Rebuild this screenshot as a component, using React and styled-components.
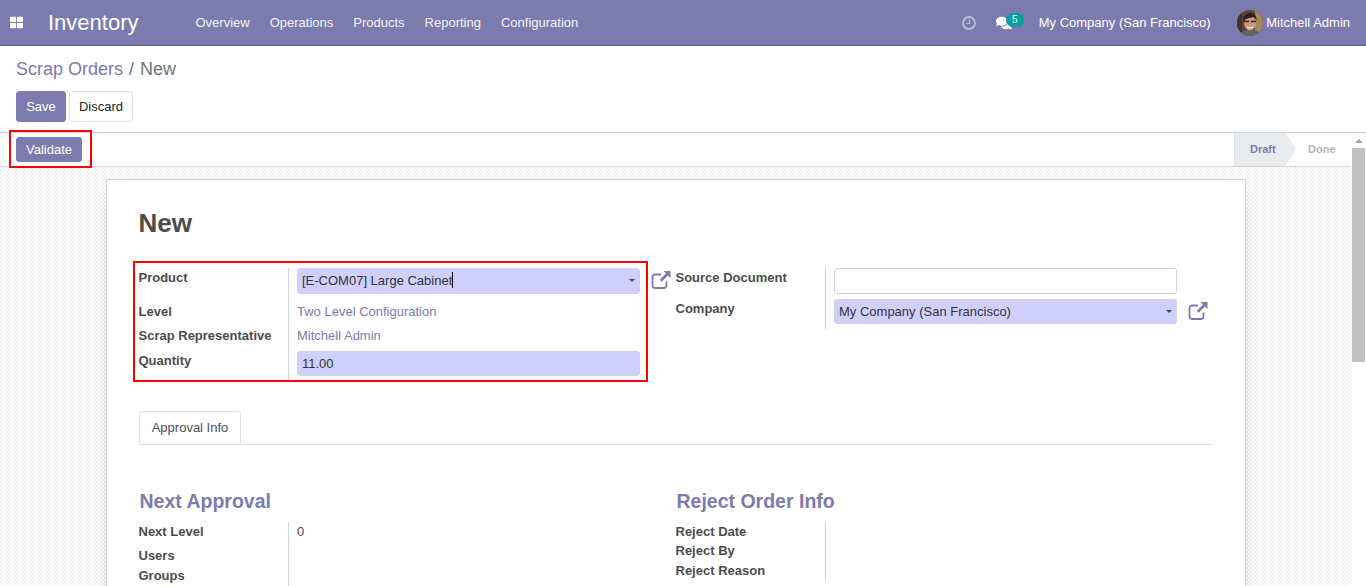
import React from 'react';
import styled, {createGlobalStyle} from 'styled-components';
import {FaThLarge, FaComments} from 'react-icons/fa';

const Global = createGlobalStyle`
    html, body {
        margin:0;
        padding:0;
        height:100%;
        overflow:hidden;
    }
    body {
        font-family:"Liberation Sans", Arial, sans-serif;
        font-size:13px;
        color:#4c4c4c;
        background:#fff;
    }
`

const menus = ['Overview','Operations','Products','Reporting','Configuration'];

const LinkIcon = ({size}) => (
    <svg width={size} height={size} viewBox="0 0 20 20" fill="none">
        <path d="M15.5 11.5v4a2.5 2.5 0 0 1-2.5 2.5H4a2.5 2.5 0 0 1-2.5-2.5V7A2.5 2.5 0 0 1 4 4.5h6" stroke="#7c7bad" strokeWidth="1.8"/>
        <path d="M12.5 1h7v7l-2.500-2.500-6.300 6.300-2-2L15 3.500z" fill="#7c7bad"/>
    </svg>
)

const ClockGlyph = () => (
    <svg width="14" height="14" viewBox="0 0 14 14" fill="none" stroke="currentColor">
        <circle cx="7" cy="7" r="6" strokeWidth="1.800"/>
        <path d="M7.500 3v4.500H4.500" strokeWidth="1.100"/>
    </svg>
)

const Avatar = () => (
    <svg width="26" height="26" viewBox="0 0 26 26">
        <clipPath id="round"><circle cx="13" cy="13" r="13"/></clipPath>
        <g clipPath="url(#round)">
            <rect width="26" height="26" fill="#5a4433"/>
            <rect x="18" width="8" height="26" fill="#a08a5e"/>
            <rect width="5" height="26" fill="#3f332b"/>
            <path d="M3 26c0-5 5-6 10-6s10 1 10 6z" fill="#5f6462"/>
            <ellipse cx="13" cy="13" rx="6" ry="7.500" fill="#c99a7e"/>
            <path d="M6.500 11c-.5-6 3.500-8 7-8s6.500 2.500 6 8c-1-2-1.500-3.500-3-4-3 1-7 1-10 4z" fill="#2c211b"/>
            <path d="M7 11.500h5M14 11.500h5" stroke="#2b2523" strokeWidth="1.300"/>
            <path d="M10 17c2 1.200 4 1.200 6 0" stroke="#f1e6dc" strokeWidth="1.100" fill="none"/>
        </g>
    </svg>
)

export default function App(){
    return (
        <>
            <Global/>
            <Page>
                <NavBar>
                    <AppsButton><FaThLarge size={13}/></AppsButton>
                    <Brand>Inventory</Brand>
                    <MenuList>
                        {menus.map(m => <MenuItem key={m}>{m}</MenuItem>)}
                    </MenuList>
                    <Systray>
                        <ClockIcon><ClockGlyph/></ClockIcon>
                        <Messages>
                            <FaComments size={16}/>
                            <Badge>5</Badge>
                        </Messages>
                        <CompanyName>My Company (San Francisco)</CompanyName>
                        <UserMenu>
                            <Avatar/>
                            <span>Mitchell Admin</span>
                        </UserMenu>
                    </Systray>
                </NavBar>

                <ControlPanel>
                    <Breadcrumb>
                        <a>Scrap Orders</a>
                        <Slash>/</Slash>
                        <span>New</span>
                    </Breadcrumb>
                    <Buttons>
                        <PrimaryButton>Save</PrimaryButton>
                        <SecondaryButton>Discard</SecondaryButton>
                    </Buttons>
                </ControlPanel>

                <Body>
                    <Main>
                        <StatusBar>
                            <ValidateBox>
                                <ValidateButton>Validate</ValidateButton>
                            </ValidateBox>
                            <Stages>
                                <Stage $active>Draft</Stage>
                                <Stage>Done</Stage>
                            </Stages>
                        </StatusBar>
                        <Background>
                            <Sheet>
                                <Title>New</Title>
                                <TopGroup>
                                    <Column>
                                        <Highlight/>
                                        <Labels>
                                            <Label $h={34}>Product</Label>
                                            <Label $h={24}>Level</Label>
                                            <Label $h={25}>Scrap Representative</Label>
                                            <Label $h={30}>Quantity</Label>
                                        </Labels>
                                        <Values>
                                            <SelectField $h={26} $lift>
                                                <span>[E-COM07] Large Cabinet<Caret/></span>
                                                <Arrow/>
                                            </SelectField>
                                            <LinkValue $top={10}>Two Level Configuration</LinkValue>
                                            <LinkValue $top={8}>Mitchell Admin</LinkValue>
                                            <SelectField $h={25} $top={7}>
                                                <span>11.00</span>
                                            </SelectField>
                                        </Values>
                                        <OpenLink><LinkIcon size={20}/></OpenLink>
                                    </Column>
                                    <Column $second>
                                        <Labels>
                                            <Label $h={31}>Source Document</Label>
                                            <Label $h={31}>Company</Label>
                                        </Labels>
                                        <Values>
                                            <TextField/>
                                            <SelectField $h={25} $top={5}>
                                                <span>My Company (San Francisco)</span>
                                                <Arrow/>
                                            </SelectField>
                                        </Values>
                                        <CompanyLink><LinkIcon size={20}/></CompanyLink>
                                    </Column>
                                </TopGroup>

                                <Tabs>
                                    <Tab>Approval Info</Tab>
                                </Tabs>

                                <BottomGroup>
                                    <InfoColumn>
                                        <Heading>Next Approval</Heading>
                                        <InfoRows>
                                            <Labels $info>
                                                <Label $h={24} $top={2}>Next Level</Label>
                                                <Label $h={20} $top={2}>Users</Label>
                                                <Label $h={20} $top={2}>Groups</Label>
                                            </Labels>
                                            <InfoValue>0</InfoValue>
                                        </InfoRows>
                                    </InfoColumn>
                                    <InfoColumn>
                                        <Heading>Reject Order Info</Heading>
                                        <InfoRows $short>
                                            <Labels $info>
                                                <Label $h={19} $top={2}>Reject Date</Label>
                                                <Label $h={20} $top={2}>Reject By</Label>
                                                <Label $h={20} $top={2}>Reject Reason</Label>
                                            </Labels>
                                        </InfoRows>
                                    </InfoColumn>
                                </BottomGroup>
                            </Sheet>
                        </Background>
                    </Main>
                    <Scrollbar>
                        <ScrollUp/>
                        <ScrollThumb/>
                    </Scrollbar>
                </Body>
            </Page>
        </>
    )
}

const Page = styled.div`
    width:1366px;
    height:586px;
    display:flex;
    flex-direction:column;
    overflow:hidden;
`

const NavBar = styled.header`
    height:46px;
    box-sizing:border-box;
    flex:none;
    display:flex;
    align-items:center;
    background:#7c7bad;
    border-bottom:1px solid #5f5e97;
    color:#fff;
`

const AppsButton = styled.div`
    width:32px;
    padding-left:10px;
    box-sizing:border-box;
    display:flex;
    align-items:center;
`

const Brand = styled.div`
    width:163.5px;
    padding-left:16px;
    box-sizing:border-box;
    font-size:22px;
    line-height:1;
`

const MenuList = styled.nav`
    display:flex;
    gap:20px;
    color:#fff;
    opacity:.92;
`

const MenuItem = styled.span`
    font-size:13px;
`

const Systray = styled.div`
    margin-left:auto;
    display:flex;
    align-items:center;
    padding-right:16px;
`

const ClockIcon = styled.span`
    display:flex;
    margin-right:20px;
    color:#bdbcd6;
`

const Messages = styled.span`
    position:relative;
    display:flex;
    margin-right:27px;
`

const Badge = styled.span`
    position:absolute;
    left:10px;
    top:-2px;
    width:18px;
    height:14px;
    border-radius:7px;
    background:#00a09d;
    font-size:10px;
    line-height:14px;
    text-align:center;
`

const CompanyName = styled.span`
    margin-right:26.5px;
`

const UserMenu = styled.span`
    display:flex;
    align-items:center;
    gap:3px;
`

const ControlPanel = styled.div`
    height:87px;
    flex:none;
    padding:0 16px;
    box-sizing:border-box;
    background:#fff;
    border-bottom:1px solid #ced4da;
`

const Breadcrumb = styled.div`
    padding-top:12px;
    height:45px;
    box-sizing:border-box;
    font-size:18px;
    line-height:22px;
    color:#6c757d;
    a{
        color:#7c7bad;
    }
`

const Slash = styled.span`
    margin:0 6px;
`

const Buttons = styled.div`
    display:flex;
    gap:3px;
`

const PrimaryButton = styled.button`
    height:31px;
    width:50px;
    padding:0;
    border:1px solid #7c7bad;
    border-radius:3px;
    background:#7c7bad;
    color:#fff;
    font:13px "Liberation Sans", Arial, sans-serif;
`

const SecondaryButton = styled(PrimaryButton)`
    width:64px;
    background:#fff;
    color:#212529;
    border-color:#dee2e6;
`

const Body = styled.div`
    flex:1;
    min-height:0;
    display:flex;
`

const Main = styled.main`
    flex:1;
    min-width:0;
    display:flex;
    flex-direction:column;
`

const StatusBar = styled.div`
    height:34px;
    flex:none;
    box-sizing:border-box;
    display:flex;
    justify-content:space-between;
    background:#fff;
    border-bottom:1px solid #ced4da;
`

const ValidateBox = styled.div`
    position:relative;
    padding:4px 0 0 16px;
    &::after{
        content:'';
        position:absolute;
        left:9px;
        top:-3px;
        width:83px;
        height:38px;
        box-sizing:border-box;
        border:2px solid #f00;
    }
`

const ValidateButton = styled(PrimaryButton)`
    width:66px;
    height:25px;
    display:block;
`

const Stages = styled.div`
    display:flex;
`

const Stage = styled.div`
    position:relative;
    z-index:${p => p.$active ? 1 : 0};
    width:${p => p.$active ? 52 : 65}px;
    padding-left:${p => p.$active ? 15 : 22}px;
    box-sizing:border-box;
    font-size:11px;
    font-weight:700;
    line-height:33px;
    color:${p => p.$active ? '#7c7bad' : '#b5b5b5'};
    background:${p => p.$active ? '#e9ecef' : '#fff'};
    border-left:${p => p.$active ? '1px solid #dee2e6' : '0'};
    ${p => p.$active && `
        &::after{
            content:'';
            position:absolute;
            left:100%;
            top:0;
            border-style:solid;
            border-width:16.5px 0 16.5px 10px;
            border-color:transparent transparent transparent #e9ecef;
        }
    `}
`

const Background = styled.div`
    flex:1;
    min-height:0;
    overflow:hidden;
    padding-top:12px;
    background:repeating-conic-gradient(#f3f3f3 0 25%, #fff 0 50%) 0 0 / 4px 4px;
`

const Sheet = styled.section`
    width:1140px;
    height:600px;
    margin-left:106px;
    padding:25px 32px 0 31.5px;
    box-sizing:border-box;
    background:#fff;
    border:1px solid #ced4da;
    box-shadow:0 5px 20px -15px #000;
`

const Title = styled.h1`
    margin:0 0 20px;
    height:36px;
    font-size:26px;
    font-weight:700;
    line-height:36px;
    color:#4c4c4c;
`

const TopGroup = styled.div`
    display:flex;
    height:150px;
    padding-top:1px;
    box-sizing:border-box;
`

const Column = styled.div`
    position:relative;
    display:flex;
    width:${p => p.$second ? 'auto' : '537px'};
    padding-top:6px;
    height:114px;
    box-sizing:border-box;
`

const Highlight = styled.div`
    position:absolute;
    left:-5.5px;
    top:-1px;
    width:515px;
    height:121px;
    box-sizing:border-box;
    border:2px solid #f00;
    pointer-events:none;
`

const Labels = styled.div`
    width:150.5px;
    flex:none;
    box-sizing:border-box;
    border-right:1px solid #ced4da;
    height:${p => p.$info ? 'auto' : 'fit-content'};
`

const Label = styled.div`
    height:${p => p.$h}px;
    padding-top:${p => p.$top || 2}px;
    box-sizing:border-box;
    font-size:13px;
    font-weight:700;
    line-height:16px;
    color:#4c4c4c;
`

const Values = styled.div`
    width:343px;
    margin-left:8px;
    flex:none;
`

const SelectField = styled.div`
    height:${p => p.$h}px;
    margin-top:${p => p.$top || 0}px;
    padding:0 4px ${p => p.$lift ? 2 : 0}px;
    box-sizing:border-box;
    display:flex;
    align-items:center;
    justify-content:space-between;
    background:#d0d0ff;
    border:1px solid #ced4da;
    border-radius:3px;
    font-size:13px;
    color:#333;
`

const Caret = styled.i`
    display:inline-block;
    width:1px;
    height:16px;
    background:#000;
    vertical-align:-3px;
`

const Arrow = styled.i`
    width:0;
    height:0;
    margin-right:0;
    border-style:solid;
    border-width:3.5px 3.5px 0;
    border-color:#4c4c4c transparent transparent;
`

const LinkValue = styled.div`
    margin-top:${p => p.$top}px;
    font-size:13px;
    line-height:16px;
    color:#7c7bad;
`

const TextField = styled.div`
    height:26px;
    box-sizing:border-box;
    background:#fff;
    border:1px solid #ced4da;
    border-radius:3px;
`

const OpenLink = styled.span`
    position:absolute;
    left:512px;
    top:8px;
    line-height:0;
`

const CompanyLink = styled(OpenLink)`
    left:512.5px;
    top:39px;
`

const Tabs = styled.div`
    height:33px;
    display:flex;
    padding-left:.5px;
    border-bottom:1px solid #dee2e6;
`

const Tab = styled.div`
    width:102px;
    height:33px;
    box-sizing:border-box;
    margin-bottom:-1px;
    background:#fff;
    border:1px solid #dee2e6;
    border-bottom:0;
    border-radius:3px 3px 0 0;
    font-size:13px;
    line-height:32px;
    text-align:center;
    color:#495057;
`

const BottomGroup = styled.div`
    display:flex;
    padding-top:44px;
`

const InfoColumn = styled.div`
    width:537px;
`

const Heading = styled.h2`
    margin:0 0 9px 1px;
    font-size:19.5px;
    font-weight:700;
    line-height:24px;
    color:#7c7bad;
`

const InfoRows = styled.div`
    display:flex;
    height:${p => p.$short ? 58 : 64}px;
`

const InfoValue = styled.div`
    margin-left:8px;
    padding-top:2px;
    font-size:13px;
    line-height:16px;
`

const Scrollbar = styled.aside`
    width:15px;
    flex:none;
    display:flex;
    flex-direction:column;
    align-items:center;
    background:#fff;
`

const ScrollUp = styled.i`
    width:0;
    height:0;
    margin:6px 0 5px;
    border-style:solid;
    border-width:0 4px 4px;
    border-color:transparent transparent #a3a3a3;
`

const ScrollThumb = styled.div`
    width:13px;
    height:214px;
    background:#c1c1c1;
`
